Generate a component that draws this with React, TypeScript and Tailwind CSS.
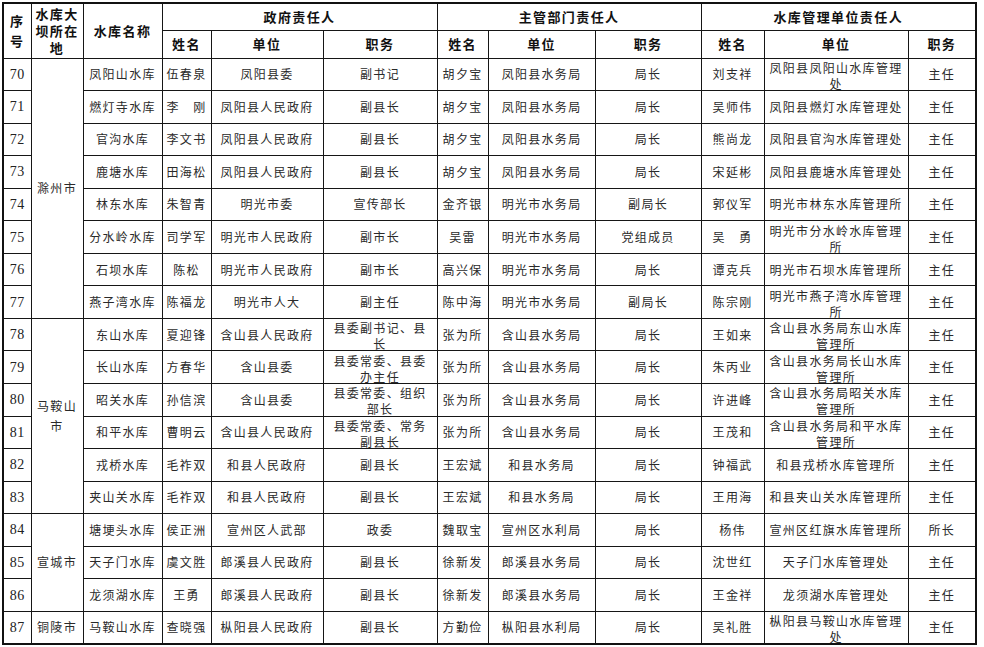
const cols = [28, 52, 79, 49, 112, 114, 51, 107, 106, 63, 144, 68]

type Row = [string, string, string, string, string, string, string, string, string, string, string]

// 序号, 水库名称, 政府: 姓名 单位 职务, 主管: 姓名 单位 职务, 管理单位: 姓名 单位 职务
const rows: Row[] = [
  ['70', '凤阳山水库', '伍春泉', '凤阳县委', '副书记', '胡夕宝', '凤阳县水务局', '局长', '刘支祥', '凤阳县凤阳山水库管理\n处', '主任'],
  ['71', '燃灯寺水库', '李　刚', '凤阳县人民政府', '副县长', '胡夕宝', '凤阳县水务局', '局长', '吴师伟', '凤阳县燃灯水库管理处', '主任'],
  ['72', '官沟水库', '李文书', '凤阳县人民政府', '副县长', '胡夕宝', '凤阳县水务局', '局长', '熊尚龙', '凤阳县官沟水库管理处', '主任'],
  ['73', '鹿塘水库', '田海松', '凤阳县人民政府', '副县长', '胡夕宝', '凤阳县水务局', '局长', '宋延彬', '凤阳县鹿塘水库管理处', '主任'],
  ['74', '林东水库', '朱智青', '明光市委', '宣传部长', '金齐银', '明光市水务局', '副局长', '郭仪军', '明光市林东水库管理所', '主任'],
  ['75', '分水岭水库', '司学军', '明光市人民政府', '副市长', '吴雷', '明光市水务局', '党组成员', '吴　勇', '明光市分水岭水库管理\n所', '主任'],
  ['76', '石坝水库', '陈松', '明光市人民政府', '副市长', '高兴保', '明光市水务局', '局长', '谭克兵', '明光市石坝水库管理所', '主任'],
  ['77', '燕子湾水库', '陈福龙', '明光市人大', '副主任', '陈中海', '明光市水务局', '副局长', '陈宗刚', '明光市燕子湾水库管理\n所', '主任'],
  ['78', '东山水库', '夏迎锋', '含山县人民政府', '县委副书记、县\n长', '张为所', '含山县水务局', '局长', '王如来', '含山县水务局东山水库\n管理所', '主任'],
  ['79', '长山水库', '方春华', '含山县委', '县委常委、县委\n办主任', '张为所', '含山县水务局', '局长', '朱丙业', '含山县水务局长山水库\n管理所', '主任'],
  ['80', '昭关水库', '孙信滨', '含山县委', '县委常委、组织\n部长', '张为所', '含山县水务局', '局长', '许进峰', '含山县水务局昭关水库\n管理所', '主任'],
  ['81', '和平水库', '曹明云', '含山县人民政府', '县委常委、常务\n副县长', '张为所', '含山县水务局', '局长', '王茂和', '含山县水务局和平水库\n管理所', '主任'],
  ['82', '戎桥水库', '毛祚双', '和县人民政府', '副县长', '王宏斌', '和县水务局', '局长', '钟福武', '和县戎桥水库管理所', '主任'],
  ['83', '夹山关水库', '毛祚双', '和县人民政府', '副县长', '王宏斌', '和县水务局', '局长', '王用海', '和县夹山关水库管理所', '主任'],
  ['84', '塘埂头水库', '侯正洲', '宣州区人武部', '政委', '魏取宝', '宣州区水利局', '局长', '杨伟', '宣州区红旗水库管理所', '所长'],
  ['85', '天子门水库', '虞文胜', '郎溪县人民政府', '副县长', '徐新发', '郎溪县水务局', '局长', '沈世红', '天子门水库管理处', '主任'],
  ['86', '龙须湖水库', '王勇', '郎溪县人民政府', '副县长', '徐新发', '郎溪县水务局', '局长', '王金祥', '龙须湖水库管理处', '主任'],
  ['87', '马鞍山水库', '查晓强', '枞阳县人民政府', '副县长', '方勤俭', '枞阳县水利局', '局长', '吴礼胜', '枞阳县马鞍山水库管理\n处', '主任'],
]

// city cell spans, keyed by the first row index of each group
const cities: Record<number, { name: string; span: number }> = {
  0: { name: '滁州市', span: 8 },
  8: { name: '马鞍山\n市', span: 6 },
  14: { name: '宣城市', span: 3 },
  17: { name: '铜陵市', span: 1 },
}

const td = 'border-[1.5px] border-[#161616] p-0 text-center align-middle'
const th = 'border-[1.5px] border-[#161616] p-0 text-center align-middle font-bold text-[13px] tracking-[1.4px] text-[#111]'

function Text({ value }: { value: string }) {
  if (value.includes('\n')) {
    return (
      <div className="h-[31px] overflow-hidden whitespace-pre-line pt-[1px] leading-[16px]">
        {value}
      </div>
    )
  }
  return <span className="whitespace-nowrap">{value}</span>
}

export default function App() {
  return (
    <div
      className="min-h-screen bg-white pl-[2px] pt-[2px] text-[#2a2a2a]"
      style={{ fontFamily: '"Noto Sans CJK SC", "Noto Sans", sans-serif' }}
    >
      <table className="table-fixed border-collapse border-2 border-[#111] text-[12px] tracking-[1.3px]" style={{ width: 974 }}>
        <colgroup>
          {cols.map((w, i) => (
            <col key={i} style={{ width: w }} />
          ))}
        </colgroup>
        <thead>
          <tr className="h-[27px]">
            <th rowSpan={2} className={th + ' leading-[20px]'}>
              序<br />号
            </th>
            <th rowSpan={2} className={th + ' leading-[17px]'}>
              水库大<br />坝所在<br />地
            </th>
            <th rowSpan={2} className={th}>水库名称</th>
            <th colSpan={3} className={th}>政府责任人</th>
            <th colSpan={3} className={th}>主管部门责任人</th>
            <th colSpan={3} className={th}>水库管理单位责任人</th>
          </tr>
          <tr className="h-[28px]">
            <th className={th}>姓名</th>
            <th className={th}>单位</th>
            <th className={th}>职务</th>
            <th className={th}>姓名</th>
            <th className={th}>单位</th>
            <th className={th}>职务</th>
            <th className={th}>姓名</th>
            <th className={th}>单位</th>
            <th className={th}>职务</th>
          </tr>
        </thead>
        <tbody>
          {rows.map((r, i) => (
            <tr key={r[0]} className="h-[32.55px]">
              <td className={td + ' text-[14px] tracking-[0.5px] text-[#222]'} style={{ fontFamily: '"Liberation Serif", serif' }}>
                {r[0]}
              </td>
              {cities[i] && (
                <td rowSpan={cities[i].span} className={td + ' whitespace-pre-line leading-[20px]'}>
                  {cities[i].name}
                </td>
              )}
              {r.slice(1).map((v, j) => (
                <td key={j} className={td}>
                  <Text value={v} />
                </td>
              ))}
            </tr>
          ))}
        </tbody>
      </table>
    </div>
  )
}
